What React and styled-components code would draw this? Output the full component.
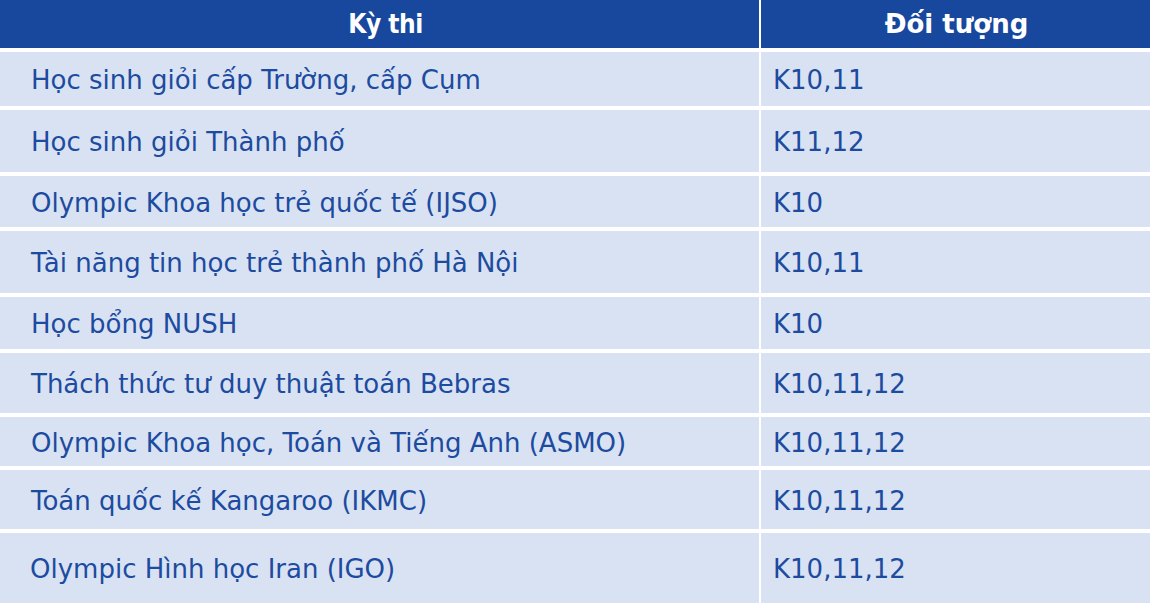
import React from "react";
import styled, { createGlobalStyle } from "styled-components";

const Global = createGlobalStyle`
  html, body { margin: 0; padding: 0; background: #ffffff; }
  body { font-family: "DejaVu Sans", Verdana, sans-serif; }
`;

const Table = styled.div`
  display: grid;
  grid-template-columns: 759px 389px;
  grid-template-rows: ${(p) => p.$rows.map((r) => `${r}px`).join(" ")};
  column-gap: 2px;
  row-gap: 4px;
  width: 1150px;
  background: #ffffff;
`;

const HeadCell = styled.div`
  background: #18479e;
  color: #ffffff;
  font-family: ${(p) => (p.$narrow ? '"DejaVu Sans Condensed", "DejaVu Sans", sans-serif' : '"DejaVu Sans", sans-serif')};
  font-weight: bold;
  font-size: 26px;
  letter-spacing: ${(p) => (p.$narrow ? "-0.5px" : "0")};
  display: flex;
  align-items: center;
  justify-content: center;
  padding: ${(p) => (p.$narrow ? "0 0 0 12px" : "0 0 0 2px")};
`;

const Cell = styled.div`
  background: #d9e2f2;
  color: #1c4ba0;
  font-size: 26px;
  display: flex;
  align-items: center;
  padding: 2px 0 0 ${(p) => p.$pad}px;
  white-space: nowrap;
`;

const data = [
  ["Học sinh giỏi cấp Trường, cấp Cụm", "K10,11"],
  ["Học sinh giỏi Thành phố", "K11,12"],
  ["Olympic Khoa học trẻ quốc tế (IJSO)", "K10"],
  ["Tài năng tin học trẻ thành phố Hà Nội", "K10,11"],
  ["Học bổng NUSH", "K10"],
  ["Thách thức tư duy thuật toán Bebras", "K10,11,12"],
  ["Olympic Khoa học, Toán và Tiếng Anh (ASMO)", "K10,11,12"],
  ["Toán quốc kế Kangaroo (IKMC)", "K10,11,12"],
  ["Olympic Hình học Iran (IGO)", "K10,11,12"],
];

const rows = [48, 54, 62, 51, 62, 52, 60, 49, 59, 70];

export default function App() {
  return (
    <>
      <Global />
      <Table $rows={rows}>
        <HeadCell $narrow>Kỳ thi</HeadCell>
        <HeadCell>Đối tượng</HeadCell>
        {data.map(([a, b], i) => (
          <React.Fragment key={i}>
            <Cell $pad={i === 8 ? 30 : 31}>{a}</Cell>
            <Cell $pad={12}>{b}</Cell>
          </React.Fragment>
        ))}
      </Table>
    </>
  );
}
